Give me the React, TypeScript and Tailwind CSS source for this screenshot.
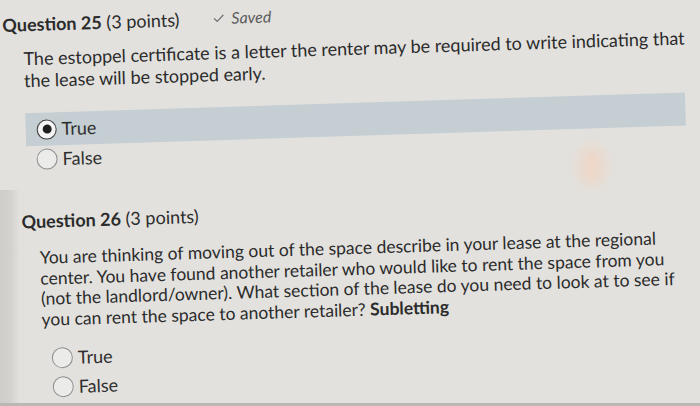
import { Check } from 'lucide-react';

type Option = { label: string; checked?: boolean };

function Radio({ checked }: { checked?: boolean }) {
  return checked ? (
    <span className="flex h-[20px] w-[20px] shrink-0 items-center justify-center rounded-full border-[1.5px] border-[#3a3a3a] bg-[#f4f4f4]">
      <span className="h-[9px] w-[9px] rounded-full bg-[#1e1e1e]" />
    </span>
  ) : (
    <span className="h-[21px] w-[21px] shrink-0 rounded-full border-[1.5px] border-[#8d8d8d] bg-[#ebebea]" />
  );
}

function Choice({ label, checked }: Option) {
  return (
    <div className="flex h-full items-center gap-[5px]">
      <Radio checked={checked} />
      <span className="text-[18px] text-[#2f2f2f]">{label}</span>
    </div>
  );
}

export default function App() {
  return (
    <div className="relative h-[406px] w-[700px] overflow-hidden border-b-[3px] border-[#b9b8b4] bg-[#e2e1de] font-['Lato','Noto_Sans',sans-serif] text-[#2b2b2b]">
      <div className="w-[720px] origin-top-left rotate-[-1.8deg]">
        {/* question 25 */}
        <div className="mt-[13px] flex h-6 items-center pl-[2px] text-[18px]">
          <span className="font-bold">Question 25</span>
          <span>&nbsp;(3 points)</span>
          <span className="ml-[33px] flex items-center gap-[6px] text-[16px] italic text-[#5c5c5c]">
            <Check size={13} strokeWidth={2.5} className="text-[#777]" />
            Saved
          </span>
        </div>
        <p className="mt-[12px] pl-[22px] text-[18px] leading-[21.5px]">
          The estoppel certificate is a letter the renter may be required to write indicating that
          <br />
          the lease will be stopped early.
        </p>
        <div className="ml-[22px] mt-[22px] h-[33px] w-[660px] bg-[#c5ced3] pl-[11px]">
          <Choice label="True" checked />
        </div>
        <div className="h-[26px] pl-[32px]">
          <Choice label="False" />
        </div>

        {/* question 26 */}
        <div className="mt-[37px] flex h-6 items-center pl-[15px] text-[18px]">
          <span className="font-bold">Question 26</span>
          <span>&nbsp;(3 points)</span>
        </div>
        <p className="mt-[15px] pl-[32px] text-[17.5px] leading-[20.5px]">
          You are thinking of moving out of the space describe in your lease at the regional
          <br />
          center. You have found another retailer who would like to rent the space from you
          <br />
          (not the landlord/owner). What section of the lease do you need to look at to see if
          <br />
          you can rent the space to another retailer? <span className="font-bold">Subletting</span>
        </p>
        <div className="mt-[14px] pl-[41px]">
          <div className="h-[29px]">
            <Choice label="True" />
          </div>
          <div className="h-[29px]">
            <Choice label="False" />
          </div>
        </div>
      </div>
      <div className="pointer-events-none absolute left-0 top-[190px] h-[220px] w-[20px] bg-gradient-to-r from-[#cecdca] via-[#d2d1ce] to-transparent" />
      <div className="pointer-events-none absolute left-[580px] top-[146px] h-[40px] w-[24px] rounded-full bg-[#f3d3bd] opacity-70 blur-[7px]" />
    </div>
  );
}
